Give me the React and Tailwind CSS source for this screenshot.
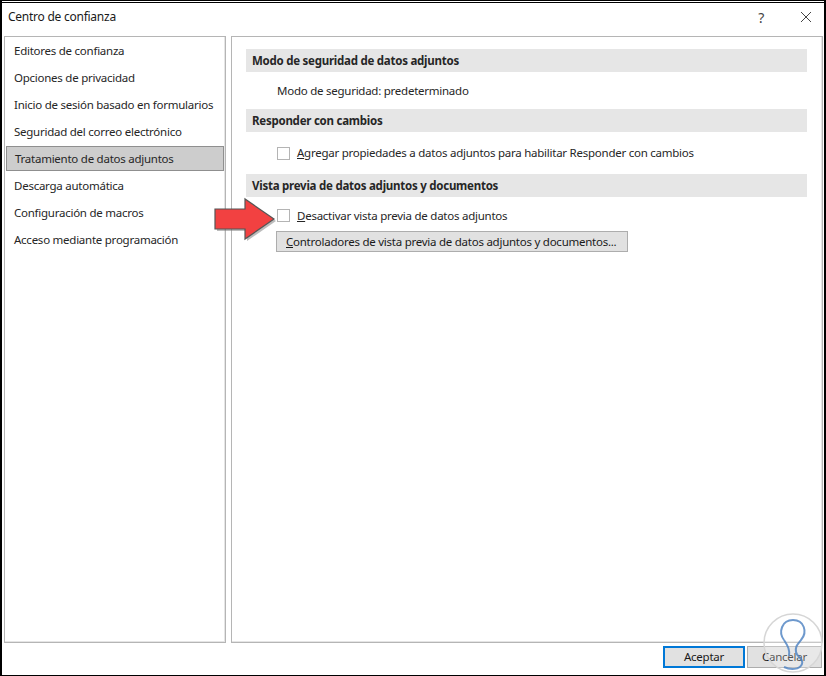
const items = [
  'Editores de confianza',
  'Opciones de privacidad',
  'Inicio de sesión basado en formularios',
  'Seguridad del correo electrónico',
  'Tratamiento de datos adjuntos',
  'Descarga automática',
  'Configuración de macros',
  'Acceso mediante programación',
];

const SectionHeader = ({ children }) => (
  <div className="h-[23px] bg-[#e6e6e6] flex items-center pl-[6px] font-bold text-[#262626]">{children}</div>
);

const Check = ({ label }) => (
  <div className="flex items-center h-[17px]">
    <span className="w-[13px] h-[13px] border border-[#b4b4b4] bg-white mr-[7px]" />
    <span><span className="underline">{label[0]}</span>{label.slice(1)}</span>
  </div>
);

const App = () => {
  return (
    <div className="w-[826px] h-[676px] bg-white border-l-2 border-r-2 border-black text-[11.5px] tracking-[-0.25px] whitespace-nowrap text-[#262626] relative" style={{ fontFamily: '"Noto Sans", sans-serif' }}>
      <div className="h-full border-t-[1px] border-b-[1px] border-black flex flex-col">
        <div className="border-t border-black mt-[1px] h-[674px] flex flex-col">
          {/* title bar */}
          <div className="h-[28px] flex items-center pl-[6px] pr-[12px]">
            <span className="text-[12px] text-[#1a1a1a]">Centro de confianza</span>
            <span className="ml-auto text-[14px] text-[#444] mr-[36px]">?</span>
            <svg width="12" height="12" viewBox="0 0 12 12" className="mb-[1px]"><path d="M1 1 L11 11 M11 1 L1 11" stroke="#444" strokeWidth="1" /></svg>
          </div>
          <div className="flex pl-[2px] pr-[1px] gap-[5px] h-[607px] mt-[5px]">
            {/* left list */}
            <div className="w-[222px] h-full border border-[#b5b5b5] shadow-[inset_-1px_-1px_0_#e5e5e5]">
              {items.map((it, i) => (
                <div
                  key={i}
                  className={
                    i === 4
                      ? 'h-[25px] my-[1px] flex items-center pl-[8px] bg-[#cdcdcd] border border-[#8f8f8f] border-b-dotted mx-[1px]'
                      : 'h-[27px] flex items-center pl-[9px]'
                  }
                >
                  {it}
                </div>
              ))}
            </div>
            {/* right panel */}
            <div className="flex-1 h-full border border-[#b5b5b5] shadow-[inset_-1px_-1px_0_#e5e5e5] pl-[14px] pr-[15px] pt-[12px]">
              <SectionHeader>Modo de seguridad de datos adjuntos</SectionHeader>
              <div className="h-[37px] flex items-center pl-[31px]">Modo de seguridad: predeterminado</div>
              <SectionHeader>Responder con cambios</SectionHeader>
              <div className="h-[42px] flex items-center pl-[31px]">
                <Check label="Agregar propiedades a datos adjuntos para habilitar Responder con cambios" />
              </div>
              <SectionHeader>Vista previa de datos adjuntos y documentos</SectionHeader>
              <div className="pl-[31px] pt-[10px] flex flex-col items-start">
                <Check label="Desactivar vista previa de datos adjuntos" />
                <button className="mt-[7px] h-[21px] w-[352px] -ml-[1px] bg-[#e1e1e1] border border-[#adadad] text-left pl-[9px] text-[#1a1a1a]">
                  <span className="underline">C</span>ontroladores de vista previa de datos adjuntos y documentos...
                </button>
              </div>
            </div>
          </div>
          {/* bottom buttons */}
          <div className="flex justify-end gap-[2px] pr-[2px] pt-[3px]">
            <button className="w-[82px] h-[22px] bg-[#e1e1e1] border-2 border-[#0078d7] text-[#1a1a1a]">Aceptar</button>
            <button className="w-[75px] h-[22px] bg-[#e1e1e1] border border-[#adadad] text-[#1a1a1a]">Cancelar</button>
          </div>
        </div>
      </div>
      {/* red arrow */}
      <svg className="absolute left-[210px] top-[196px]" width="66" height="48" viewBox="0 0 66 48">
        <path d="M3 13 H33 V3 L62 23 L33 43 V33 H3 Z" fill="#7a7a7a" transform="translate(2,2)" opacity="0.5" />
        <path d="M3 13 H33 V3 L62 23 L33 43 V33 H3 Z" fill="#f24141" stroke="#555" strokeWidth="1.2" strokeLinejoin="miter" />
      </svg>
      {/* watermark */}
      <svg className="absolute left-[760px] top-[612px]" width="62" height="62" viewBox="0 0 62 62">
        <circle cx="31" cy="31" r="29" fill="white" fillOpacity="0.25" stroke="#d6d6d6" strokeWidth="1.5" />
        <path d="M22 28 C16 20 20 8 31 8 C42 8 46 20 39 28 C36 32 33 34 34 40 C35 46 42 46 40 52 C38 58 28 58 22 55" fill="none" stroke="#4a7fc1" strokeWidth="2" opacity="0.8" />
        <path d="M22 28 C26 34 28 38 27 44" fill="none" stroke="#4a7fc1" strokeWidth="2" opacity="0.8" />
      </svg>
    </div>
  );
};

export default App;
